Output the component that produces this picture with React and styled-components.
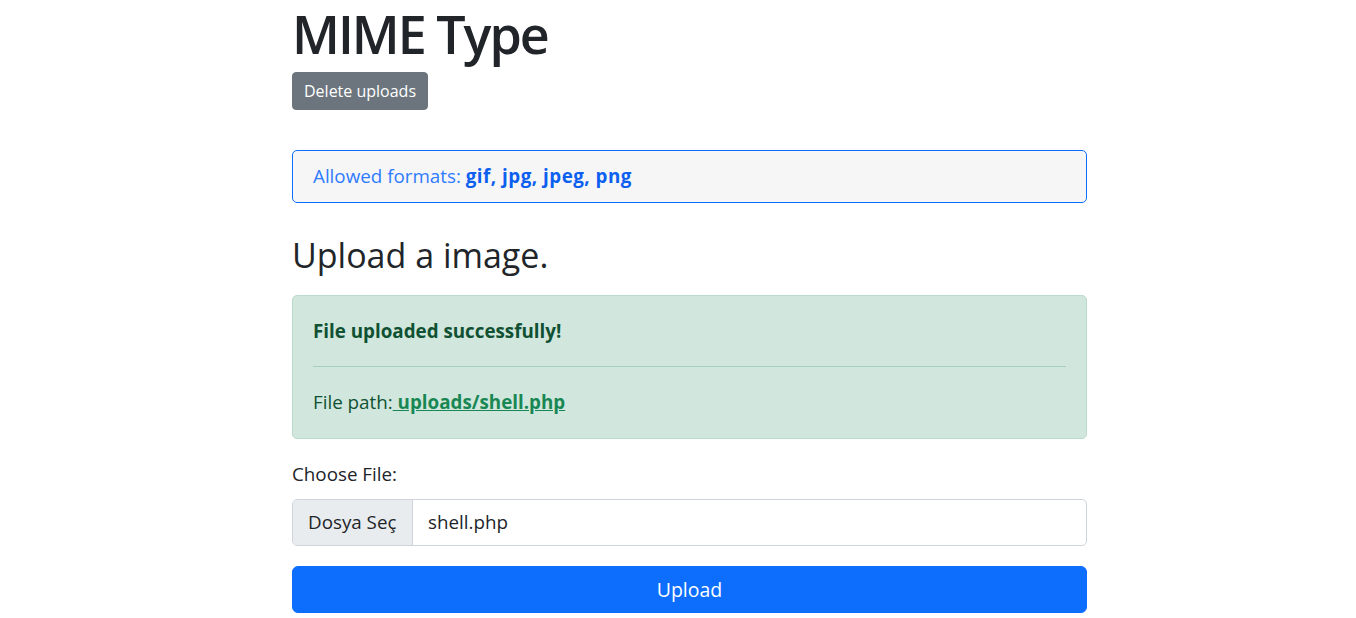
import React from "react";
import styled, { createGlobalStyle } from "styled-components";

const GlobalStyle = createGlobalStyle`
  * { box-sizing: border-box; }
  body {
    margin: 0;
    background: #fff;
    color: #212529;
    font-family: "Open Sans", "Noto Sans", sans-serif;
    font-size: 16px;
    line-height: 1.5;
  }
`;

const Page = styled.main`
  width: 795px;
  margin-left: 292px;
`;

const Title = styled.h1`
  margin: 0 0 4px;
  font-size: 52px;
  font-weight: 600;
  line-height: 68px;
  letter-spacing: -2px;
`;

const Button = styled.button`
  display: ${(p) => (p.$block ? "block" : "inline-block")};
  width: ${(p) => (p.$block ? "100%" : "auto")};
  border: 1px solid ${(p) => p.$bg};
  background: ${(p) => p.$bg};
  color: #fff;
  font-family: inherit;
  font-size: ${(p) => (p.$large ? "19.5px" : "16px")};
  line-height: ${(p) => (p.$large ? "31px" : "24px")};
  padding: ${(p) => (p.$large ? "7px 16px" : "6px 11px")};
  border-radius: ${(p) => (p.$large ? "6px" : "4px")};
  cursor: pointer;
`;

const Alert = styled.div`
  margin-top: ${(p) => p.$mt || "0"};
  padding: ${(p) => p.$pad || "12px 20px"};
  border: 1px solid ${(p) => p.$border};
  background: ${(p) => p.$bg};
  color: ${(p) => p.$color};
  border-radius: 5px;
  font-size: 18.8px;
  line-height: 27px;
`;

const Strong = styled.b`
  font-weight: 700;
  color: ${(p) => p.$color || "inherit"};
  letter-spacing: ${(p) => p.$spacing || "normal"};
`;

const SubTitle = styled.h2`
  margin: 32px 0 19px;
  font-size: 34px;
  font-weight: 500;
  line-height: 1.2;
`;

const AlertHeading = styled.p`
  margin: 0;
  font-weight: 700;
`;

const Rule = styled.hr`
  margin: 21px 0 22px;
  border: 0;
  border-top: 1px solid #a3cfbb;
`;

const PathText = styled.p`
  margin: 0;
`;

const PathLink = styled.a`
  color: #198754;
  font-weight: 700;
  text-decoration: underline;
`;

const Label = styled.label`
  display: block;
  margin: 21px 0 11px;
  font-size: 18.8px;
  line-height: 28px;
`;

const FileBox = styled.div`
  display: flex;
  height: 47px;
  border: 1px solid #ced4da;
  border-radius: 5px;
  overflow: hidden;
  font-size: 18.8px;
  margin-bottom: 20px;
`;

const FileButton = styled.span`
  display: flex;
  align-items: center;
  padding: 0 15px;
  width: 120px;
  background: #e9ecef;
  border-right: 1px solid #ced4da;
  color: #212529;
`;

const FileName = styled.span`
  display: flex;
  align-items: center;
  padding: 0 15px;
  color: #212529;
`;

export default function App() {
  return (
    <>
      <GlobalStyle />
      <Page>
        <Title>MIME Type</Title>
        <Button $bg="#6c757d">Delete uploads</Button>
        <Alert $mt="40px" $border="#0d6efd" $bg="#f6f6f6" $color="#2f7bff">
          Allowed formats:{" "}
          <Strong $color="#0d5ff0" $spacing="0.5px">gif, jpg, jpeg, png</Strong>
        </Alert>
        <SubTitle>Upload a image.</SubTitle>
        <Alert $pad="22px 20px 22px" $border="#badbcc" $bg="#d1e7dd" $color="#0f5132">
          <AlertHeading>File uploaded successfully!</AlertHeading>
          <Rule />
          <PathText>
            File path:
            <PathLink href="#"> uploads/shell.php</PathLink>
          </PathText>
        </Alert>
        <Label>Choose File:</Label>
        <FileBox>
          <FileButton>Dosya Seç</FileButton>
          <FileName>shell.php</FileName>
        </FileBox>
        <Button $block $large $bg="#0d6efd">Upload</Button>
      </Page>
    </>
  );
}
